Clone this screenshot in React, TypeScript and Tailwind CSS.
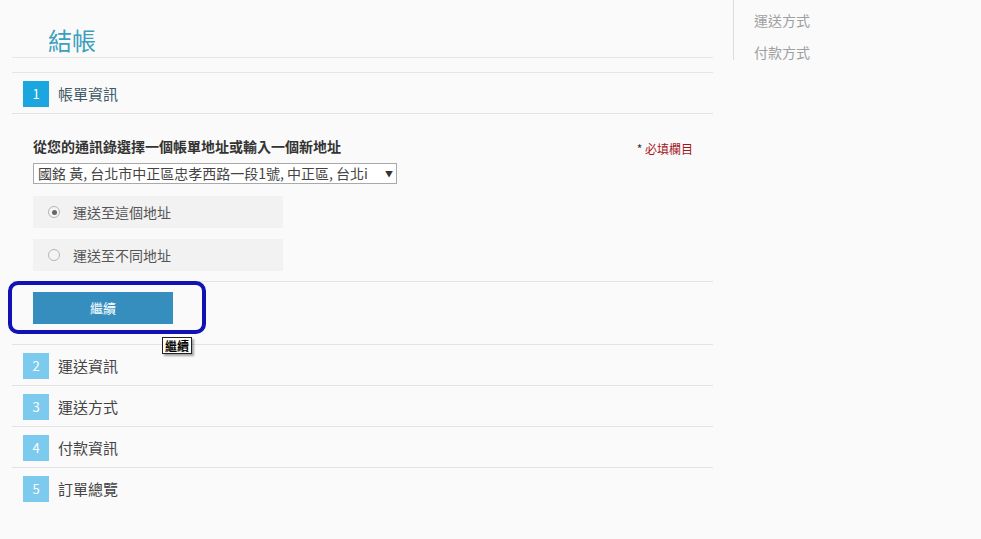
import React from "react";

const font = { fontFamily: '"Noto Sans CJK TC", "Liberation Sans", sans-serif' };

interface StepProps {
    num: number;
    title: string;
    active?: boolean;
    last?: boolean;
}

const StepHeader = ({ num, title, active, last }: StepProps) => {
    return (
        <div
            className={`flex items-center pl-[11px] pt-[8px] pb-[6px] ${
                last ? "" : "border-b border-[#e3e3e3]"
            }`}
        >
            <div
                className={`w-[26px] h-[26px] flex items-center justify-center text-[13px] text-white ${
                    active ? "bg-[#1ba6e0]" : "bg-[#7ccbee]"
                }`}
            >
                {num}
            </div>
            <p className={`ml-[9px] text-[15px] leading-[26px] ${active ? "text-[#3d5866]" : "text-[#444]"}`}>
                {title}
            </p>
        </div>
    );
};

const RadioRow = ({ label, checked }: { label: string; checked?: boolean }) => {
    return (
        <div className="w-[250px] h-[32px] bg-[#f2f2f2] flex items-center pl-[15px]">
            <span className="w-[12px] h-[12px] rounded-full border border-[#b5b5b5] bg-[#f4f4f4] flex items-center justify-center">
                {checked && <span className="w-[5px] h-[5px] rounded-full bg-[#666]" />}
            </span>
            <span className="ml-[13px] text-[14px] text-[#555]">{label}</span>
        </div>
    );
};

const App = () => {
    return (
        <div className="w-[981px] h-[539px] bg-[#fafafa] flex overflow-hidden" style={font}>
            <div className="ml-[12px] w-[701px] relative">
                <div className="pl-[36px] pt-[25px] pb-[2px] border-b border-[#e6e6e6]">
                    <h1 className="text-[24px] leading-[30px] text-[#3aa0bc]">結帳</h1>
                </div>
                <div className="mt-[14px] border-t border-[#e6e6e6]">
                    <StepHeader num={1} title="帳單資訊" active />
                </div>

                <div className="pl-[21px] pr-[20px] pt-[24px] pb-[10px] border-b border-[#e3e3e3]">
                    <div className="flex justify-between items-start">
                        <p className="text-[14px] leading-[16px] font-bold text-[#333]">
                            從您的通訊錄選擇一個帳單地址或輸入一個新地址
                        </p>
                        <p className="mt-[4px] text-[12px] leading-[14px] text-[#a4161a]">
                            <span className="text-[#333]">*</span> 必填欄目
                        </p>
                    </div>
                    <div className="mt-[7px] w-[364px] h-[21px] border border-[#a9a9a9] bg-white flex items-center pl-[4px] pr-[3px] text-[14px] text-[#444] overflow-hidden">
                        <span className="flex-1 whitespace-nowrap overflow-hidden">
                            國銘 黃, 台北市中正區忠孝西路一段1號, 中正區, 台北i
                        </span>
                        <span className="text-[8px] text-[#333] ml-[2px]">▼</span>
                    </div>
                    <div className="mt-[12px] flex flex-col gap-[11px]">
                        <RadioRow label="運送至這個地址" checked />
                        <RadioRow label="運送至不同地址" />
                    </div>
                </div>

                <div className="pl-[21px] pt-[10px] pb-[20px] border-b border-[#e3e3e3]">
                    <button className="w-[140px] h-[32px] bg-[#368ebf] text-white text-[13px]">繼續</button>
                </div>

                <StepHeader num={2} title="運送資訊" />
                <StepHeader num={3} title="運送方式" />
                <StepHeader num={4} title="付款資訊" />
                <StepHeader num={5} title="訂單總覽" last />

                <div className="absolute left-[-4px] top-[281px] w-[198px] h-[53px] border-[4px] border-[#1212b4] rounded-[10px]" />
                <div className="absolute left-[150px] top-[337px] px-[2px] h-[17px] bg-[#fffff6] border border-[#222] shadow-[2px_2px_2px_rgba(0,0,0,0.35)] text-[12px] leading-[15px] font-bold text-black">
                    繼續
                </div>
            </div>

            <div className="ml-[20px] flex-1">
                <div className="border-l border-[#dcdcdc] h-[60px] pl-[20px] pt-[4px]">
                    <p className="text-[14px] leading-[32px] text-[#a0a0a0]">運送方式</p>
                    <p className="text-[14px] leading-[32px] text-[#a0a0a0]">付款方式</p>
                </div>
            </div>
        </div>
    );
};

export default App;
